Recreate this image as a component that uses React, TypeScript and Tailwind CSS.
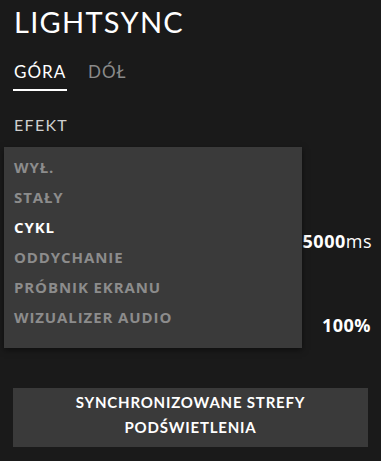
const items = ["WYŁ.", "STAŁY", "CYKL", "ODDYCHANIE", "PRÓBNIK EKRANU", "WIZUALIZER AUDIO"];

export default function App() {
  return (
    <div className="w-[381px] h-[461px] bg-[#1a1a1a] text-white overflow-hidden font-['Lato','Open_Sans',sans-serif]">
      <div className="px-[14px] pt-[4px]">
        <h1 className="text-[29px] leading-[36px] tracking-[1.3px] font-normal">LIGHTSYNC</h1>
        <div className="flex gap-[21px] mt-[22px]">
          <div className="flex flex-col">
            <span className="text-[17px] leading-[20px] tracking-[1px]">GÓRA</span>
            <span className="block h-[2px] bg-white mt-[7px] -ml-[1px] w-[54px]" />
          </div>
          <span className="text-[17px] leading-[20px] tracking-[1px] text-[#8a8a8a]">DÓŁ</span>
        </div>
        <div className="mt-[24px] text-[16px] leading-[20px] tracking-[1.3px] text-[#cfcfcf]">EFEKT</div>
      </div>

      <div className="relative mt-[12px] h-[230px]">
        <div className="flex justify-end px-[9px] pt-[82px] font-['Open_Sans',sans-serif] text-[18px] leading-[24px] tracking-[0.5px]">
          <span className="font-bold">5000</span>
          <span>ms</span>
        </div>
        <div className="flex justify-end px-[10px] mt-[60px] font-['Open_Sans',sans-serif] text-[18px] leading-[24px] tracking-[0.5px] font-bold">
          100%
        </div>

        <div className="absolute left-[4px] top-0 w-[298px] h-[201px] bg-[#3a3a3a] shadow-[0_2px_6px_rgba(0,0,0,0.5)] pt-[5px] font-['Open_Sans',sans-serif]">
          {items.map((it) => (
            <div
              key={it}
              className={`px-[10px] h-[30px] flex items-center text-[15px] font-bold tracking-[0.9px] ${
                it === "CYKL" ? "text-white" : "text-[#8c8c8c]"
              }`}
            >
              {it}
            </div>
          ))}
        </div>
      </div>

      <div className="px-[13px] mt-[11px]">
        <button className="w-full h-[59px] bg-[#3a3a3a] text-white text-[15px] leading-[25px] font-bold tracking-[0.8px] flex flex-col items-center justify-center pb-[6px]">
          <span>SYNCHRONIZOWANE STREFY</span>
          <span>PODŚWIETLENIA</span>
        </button>
      </div>
    </div>
  );
}
